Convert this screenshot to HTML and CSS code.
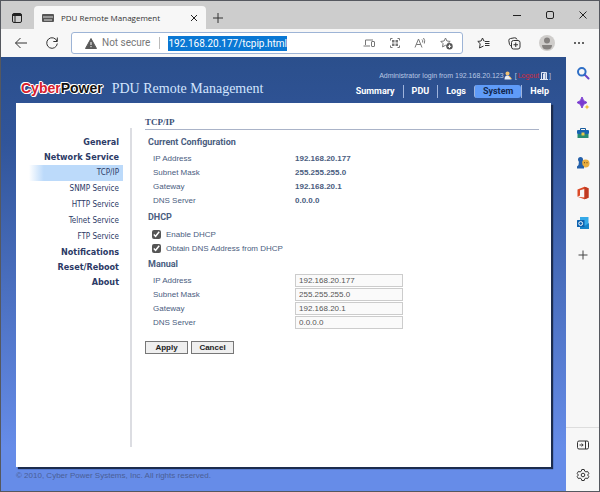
FILE: index.html
```html
<!DOCTYPE html>
<html lang="en">
<head>
  <meta charset="UTF-8" />
  <meta name="viewport" content="width=device-width, initial-scale=1.0" />
  <title>PDU Remote Management</title>
  <link rel="stylesheet" href="styles.css">
</head>
<body>
  <div class="window">
    <div class="tabstrip">
      <button class="icon-btn workspace-btn" type="button" aria-label="Tab actions">
        <svg width="12" height="12" viewBox="0 0 12 12" fill="none" stroke="#222"><rect x="1.5" y="1.5" width="9" height="9" rx="1.5"/><path d="M1.5 3h9" stroke-width="2"/><path d="M4 4v6.500"/></svg>
      </button>
      <div class="tab">
        <svg width="12" height="8" viewBox="0 0 12 8"><rect width="12" height="8" rx="1" fill="#555"/><path d="M2 2v2M4 2v2M6 2v2M8 2v2M10 2v2M2 6h8" stroke="#ddd"/></svg>
        <span class="tab-title">PDU Remote Management</span>
        <button class="icon-btn" type="button" aria-label="Close tab">
          <svg width="8" height="8" viewBox="0 0 8 8" stroke="#222"><path d="M1 1l6 6M7 1l-6 6"/></svg>
        </button>
      </div>
      <button class="icon-btn new-tab" type="button" aria-label="New tab">
        <svg width="12" height="12" viewBox="0 0 12 12" stroke="#333"><path d="M6 1v10M1 6h10"/></svg>
      </button>
      <div class="window-controls">
        <button class="icon-btn" type="button" aria-label="Minimize">
          <svg width="8" height="8" viewBox="0 0 8 8" stroke="#222"><path d="M0 4.500h8"/></svg>
        </button>
        <button class="icon-btn" type="button" aria-label="Maximize">
          <svg width="8" height="8" viewBox="0 0 8 8" fill="none" stroke="#222"><rect x=".5" y=".5" width="7" height="7" rx="1.500"/></svg>
        </button>
        <button class="icon-btn" type="button" aria-label="Close">
          <svg width="8" height="8" viewBox="0 0 8 8" stroke="#222"><path d="M.5.5l7 7M7.500.5l-7 7"/></svg>
        </button>
      </div>
    </div>

    <div class="toolbar">
      <button class="icon-btn" type="button" aria-label="Back">
        <svg width="14" height="14" viewBox="0 0 14 14" fill="none" stroke="#333"><path d="M13 7H1.500M6.500 2l-5 5 5 5"/></svg>
      </button>
      <button class="icon-btn reload" type="button" aria-label="Refresh">
        <svg width="14" height="14" viewBox="0 0 14 14" fill="none" stroke="#333"><path d="M12 5.200A5.300 5.300 0 1 0 12.300 7.500M12.300 1.500v4h-4"/></svg>
      </button>
      <div class="address">
        <svg width="12" height="11" viewBox="0 0 12 11"><path d="M6 .5L11.500 10.500H.5z" fill="#5a5a5a" stroke="#5a5a5a" stroke-linejoin="round"/><path d="M6 4v3M6 8v1.200" stroke="#fff"/></svg>
        <label class="security" for="url">Not secure</label>
        <input class="url" id="url" type="text" value="192.168.20.177/tcpip.html" />
        <div class="address-actions">
          <button class="icon-btn" type="button" aria-label="Send to devices">
            <svg width="13" height="12" viewBox="0 0 13 12" fill="none" stroke="#777"><path d="M2.500 8V3H10M.5 9H7"/><rect x="8.500" y="4.500" width="3" height="5" rx=".5"/></svg>
          </button>
          <button class="icon-btn" type="button" aria-label="QR code">
            <svg width="12" height="12" viewBox="0 0 12 12" fill="none" stroke="#777"><path d="M1.500 3.500v-2h2M8.500 1.500h2v2M10.500 8.500v2h-2M3.500 10.500h-2v-2"/><path d="M3 3h2.500v2.500H3zM6.500 3H9v2.500H6.500zM3 6.500h2.500V9H3zM6.500 6.500H9V9H6.500z" fill="#777" stroke="none"/></svg>
          </button>
          <button class="icon-btn" type="button" aria-label="Read aloud">
            <svg width="13" height="12" viewBox="0 0 13 12" fill="none" stroke="#777"><path d="M1 10.500L4.500 2 8 10.500M2.200 7.500h4.600M8 2.500q1.200 1 .6 3M9.500 1q2 2.500.8 5.500"/></svg>
          </button>
          <button class="icon-btn" type="button" aria-label="Add to favorites">
            <svg width="13" height="13" viewBox="0 0 13 13"><path d="M5.500 1l1.400 3 3.300.4-2.400 2.300.6 3.200-2.900-1.600-3 1.600.6-3.200L.8 4.400 4.100 4z" fill="none" stroke="#777"/><circle cx="9.500" cy="9.300" r="3.200" fill="#555"/><path d="M9.500 7.600V11M7.800 9.300h3.400" stroke="#fff"/></svg>
          </button>
        </div>
      </div>
      <div class="toolbar-actions">
        <button class="icon-btn" type="button" aria-label="Favorites">
          <svg width="13" height="13" viewBox="0 0 13 13" fill="none" stroke="#333"><path d="M7.500 4.200L6.900 4 5.500 1 4.100 4 .8 4.400l2.400 2.300L2.500 11l4-2M8 4.500h4.500M8 6.500h4.500M8 8.500h4.500"/></svg>
        </button>
        <button class="icon-btn" type="button" aria-label="Collections">
          <svg width="13" height="13" viewBox="0 0 13 13" fill="none" stroke="#333"><path d="M3.500 9Q2 8.800 1.500 7.500L.8 3.500Q.7 1.800 2.500 1.500L6.500.8Q8.500.6 9 2.500"/><rect x="3.500" y="3.500" width="8.500" height="8.500" rx="2"/><path d="M7.750 5.500v4.500M5.500 7.750H10"/></svg>
        </button>
        <button class="icon-btn" type="button" aria-label="Profile">
          <svg width="16" height="16" viewBox="0 0 16 16"><circle cx="8" cy="8" r="8" fill="#cfcdcb"/><circle cx="8" cy="5.500" r="3" fill="#858280"/><path d="M3 10h10q0 4.500-5 4.500T3 10z" fill="#858280"/></svg>
        </button>
        <button class="icon-btn" type="button" aria-label="More">
          <svg width="12" height="4" viewBox="0 0 12 4" fill="#333"><circle cx="2" cy="2" r="1"/><circle cx="6" cy="2" r="1"/><circle cx="10" cy="2" r="1"/></svg>
        </button>
      </div>
    </div>

    <div class="content">
      <div class="page">
        <header class="header">
          <div class="brand">
            <span class="logo"><span class="logo-red">Cyber</span>Power</span>
            <h1>PDU Remote Management</h1>
          </div>
          <div class="header-right">
            <div class="login">
              <span>Administrator login from 192.168.20.123</span>
              <svg width="8" height="9" viewBox="0 0 8 9"><circle cx="3.500" cy="2.500" r="2" fill="#f0c070"/><path d="M.5 8.500q0-4 3-4t4 4z" fill="#e8edf5"/><path d="M5 5l2.500 3" stroke="#e8a840"/></svg>
              <span class="logout">[<a href="#logout">Logout</a><svg width="8" height="9" viewBox="0 0 8 9" fill="none" stroke="#dfe6f5"><path d="M1.500 8V1.500h5V8M0 8.500h8"/><path d="M3 3l2.500-1.500v6.500L3 8.500z" fill="#dfe6f5" stroke="none"/></svg>]</span>
            </div>
            <nav class="topnav">
              <a href="#summary">Summary</a>
              <a href="#pdu">PDU</a>
              <a href="#logs">Logs</a>
              <a class="active" href="#system">System</a>
              <a href="#help">Help</a>
            </nav>
          </div>
        </header>

        <main class="panel">
          <nav class="sidenav">
            <a href="#general">General</a>
            <a href="#network">Network Service</a>
            <a class="sub active" href="#tcpip">TCP/IP</a>
            <a class="sub" href="#snmp">SNMP Service</a>
            <a class="sub" href="#http">HTTP Service</a>
            <a class="sub" href="#telnet">Telnet Service</a>
            <a class="sub" href="#ftp">FTP Service</a>
            <a href="#notifications">Notifications</a>
            <a href="#reset">Reset/Reboot</a>
            <a href="#about">About</a>
          </nav>

          <form class="settings">
            <h2>TCP/IP</h2>

            <h3>Current Configuration</h3>
            <dl class="rows">
              <dt>IP Address</dt><dd>192.168.20.177</dd>
              <dt>Subnet Mask</dt><dd>255.255.255.0</dd>
              <dt>Gateway</dt><dd>192.168.20.1</dd>
              <dt>DNS Server</dt><dd>0.0.0.0</dd>
            </dl>

            <h3>DHCP</h3>
            <div class="checks">
              <label><input type="checkbox" name="dhcp" checked /> Enable DHCP</label>
              <label><input type="checkbox" name="dns-dhcp" checked /> Obtain DNS Address from DHCP</label>
            </div>

            <h3>Manual</h3>
            <div class="rows">
              <label for="ip">IP Address</label>
              <input type="text" id="ip" value="192.168.20.177" disabled />
              <label for="mask">Subnet Mask</label>
              <input type="text" id="mask" value="255.255.255.0" disabled />
              <label for="gateway">Gateway</label>
              <input type="text" id="gateway" value="192.168.20.1" disabled />
              <label for="dns">DNS Server</label>
              <input type="text" id="dns" value="0.0.0.0" disabled />
            </div>

            <div class="buttons">
              <button type="submit">Apply</button>
              <button type="reset">Cancel</button>
            </div>
          </form>
        </main>

        <footer class="footer">© 2010, Cyber Power Systems, Inc. All rights reserved.</footer>
      </div>

      <aside class="edgebar">
        <button class="icon-btn" type="button" aria-label="Search">
          <svg width="14" height="14" viewBox="0 0 14 14" fill="none"><path d="M8.500 8.500l4 4" stroke="#6a45c8" stroke-width="2" stroke-linecap="round"/><circle cx="5.800" cy="5.800" r="3.800" stroke="#2f6fc6" stroke-width="2"/></svg>
        </button>
        <button class="icon-btn" type="button" aria-label="Discover">
          <svg width="14" height="14" viewBox="0 0 14 14"><path d="M6 1q.8 4.500 5 5.500-4.200 1-5 5.500Q5.200 7.500 1 6.500 5.200 5.500 6 1z" fill="#7a3bd0" stroke="#7a3bd0"/><path d="M11 8.500l.8 1.700 1.700.8-1.700.8L11 13.500l-.8-1.700-1.700-.8 1.700-.8z" fill="#f2bd35"/></svg>
        </button>
        <button class="icon-btn" type="button" aria-label="Tools">
          <svg width="14" height="14" viewBox="0 0 14 14"><path d="M4.500 4V2.500h5V4" fill="none" stroke="#175a9c"/><rect x="1" y="4" width="12" height="4" rx="1" fill="#1764b0"/><path d="M1.500 8h11v4h-11z" fill="#278b72"/><rect x="5.500" y="6.500" width="3" height="3" fill="#e7c84d"/></svg>
        </button>
        <button class="icon-btn" type="button" aria-label="Games">
          <svg width="14" height="14" viewBox="0 0 14 14"><circle cx="9.500" cy="7.500" r="4" fill="#e9ad3e"/><circle cx="8.500" cy="6.700" r=".6" fill="#704b18"/><circle cx="11" cy="6.700" r=".6" fill="#704b18"/><circle cx="4.500" cy="3.500" r="2.500" fill="#245fa9"/><path d="M3 5h3l.5 4L8 10.500v2H1v-2L2.500 9z" fill="#245fa9"/></svg>
        </button>
        <button class="icon-btn" type="button" aria-label="Office">
          <svg width="14" height="14" viewBox="0 0 14 14"><path d="M8.500.8l4 1.500v9.400l-4 1.500-7-2.500 7 .8V3L4 4.200v5.300l-2.500 1.200V3.500z" fill="#dc4a27"/><path d="M8.500.8l4 1.500v9.400l-4 1.500z" fill="#c03a22"/></svg>
        </button>
        <button class="icon-btn" type="button" aria-label="Outlook">
          <svg width="14" height="14" viewBox="0 0 14 14"><rect x="4" y="1" width="8.500" height="10" fill="#35a9e8"/><path d="M4 7l4.500 3L13 7v6H4z" fill="#1684c9"/><rect x="1" y="4" width="7.500" height="7" rx=".5" fill="#0c62b0"/><circle cx="4.700" cy="7.500" r="1.900" fill="none" stroke="#fff"/></svg>
        </button>
        <button class="icon-btn customize" type="button" aria-label="Customize">
          <svg width="10" height="10" viewBox="0 0 10 10" stroke="#444"><path d="M5 .5v9M.5 5h9"/></svg>
        </button>
        <div class="edgebar-bottom">
          <button class="icon-btn" type="button" aria-label="Hide sidebar">
            <svg width="12" height="10" viewBox="0 0 12 10" fill="none" stroke="#333"><rect x=".5" y="1" width="11" height="8" rx="1.500"/><path d="M8.500 1v8M2.500 5H6M4.700 3.500L6.200 5 4.700 6.500"/></svg>
          </button>
          <button class="icon-btn" type="button" aria-label="Settings">
            <svg width="14" height="14" viewBox="0 0 14 14" fill="none" stroke="#333" stroke-linejoin="round"><path d="M5.800 1.500h2.400l.5 1.700 1.200.7 1.700-.5 1.200 2.100L11.600 7l1.200 1.500-1.200 2.100-1.700-.5-1.200.7-.5 1.700H5.800l-.5-1.700-1.200-.7-1.700.5-1.200-2.100L2.400 7 1.200 5.500l1.200-2.100 1.700.5 1.200-.7z"/><circle cx="7" cy="7" r="1.800"/></svg>
          </button>
        </div>
      </aside>
    </div>
  </div>
</body>
</html>
```
FILE: styles.css
```css
* {
  margin: 0;
  padding: 0;
  box-sizing: border-box;
}

body {
  font-family: 'Liberation Sans', Arial, sans-serif;
  font-size: 8px;
  color: #4a5d80;
}

a {
  color: inherit;
  text-decoration: none;
}

.window {
  display: flex;
  flex-direction: column;
  min-height: 100vh;
  border: 1px solid #55585f;
  background: #f7f7f7;
}

.icon-btn {
  display: flex;
  align-items: center;
  justify-content: center;
  border: none;
  background: none;
}

/* browser chrome */
.tabstrip {
  display: flex;
  height: 28px;
  padding-left: 10px;
  background: #cdcdcd;
}

.tab {
  display: flex;
  align-items: center;
  gap: 7px;
  width: 172px;
  margin: 5px 0 0 11px;
  padding: 0 8px;
  border-radius: 4px 4px 0 0;
  background: #f7f7f7;
}

.tab-title {
  flex: 1;
  font-family: 'Open Sans', sans-serif;
  font-size: 8px;
  color: #333;
}

.workspace-btn,
.new-tab {
  padding-top: 5px;
}

.new-tab {
  margin-left: 6px;
}

.window-controls {
  display: flex;
  gap: 25px;
  margin-left: auto;
  padding-right: 12px;
}

.toolbar {
  display: flex;
  align-items: center;
  height: 28px;
  padding: 0 14px 0 13px;
}

.reload {
  margin: 0 12px 0 17px;
}

.address {
  display: flex;
  flex: 1;
  align-items: center;
  height: 22px;
  padding: 0 9px 0 13px;
  border: 1px solid #9db4d6;
  border-radius: 3px;
  background: #fff;
}

.security {
  margin: 0 8px 0 5px;
  padding-right: 9px;
  border-right: 1px solid #bbb;
  font: 10px/12px Roboto, sans-serif;
  color: #777;
}

.url {
  field-sizing: content;
  height: 15px;
  border: none;
  background: #0a78d4;
  font: 10px Roboto, sans-serif;
  color: #fff;
}

.address-actions {
  display: flex;
  gap: 13px;
  margin-left: auto;
}

.toolbar-actions {
  display: flex;
  align-items: center;
  gap: 18px;
  margin-left: 14px;
}

.content {
  display: flex;
  flex: 1;
}

.edgebar {
  display: flex;
  flex-direction: column;
  align-items: center;
  gap: 16px;
  width: 33px;
  padding-top: 9px;
}

.customize {
  margin-top: 4px;
}

.edgebar-bottom {
  display: flex;
  flex-direction: column;
  align-items: center;
  gap: 18px;
  width: 100%;
  margin-top: auto;
  padding: 12px 0 9px;
  border-top: 1px solid #ddd;
}

/* PDU page */
.page {
  display: flex;
  flex: 1;
  flex-direction: column;
  padding: 0 15px;
  background: linear-gradient(#2b4f8c, #31559a 20%, #668ce8 90%);
}

.header {
  display: flex;
  justify-content: space-between;
  height: 46px;
}

.brand {
  display: flex;
  align-items: center;
  gap: 9px;
  padding: 16px 0 0 5px;
}

.logo {
  font-size: 14px;
  font-weight: bold;
  color: #111;
  text-shadow: 1px 0 #fff, -1px 0 #fff, 0 1px #fff, 0 -1px #fff, 1px 1px #fff, -1px -1px #fff;
}

.logo-red {
  color: #d8202c;
}

.brand h1 {
  padding-top: 2px;
  font: 14px 'Liberation Serif', serif;
  color: #d3e5ff;
}

.header-right {
  display: flex;
  flex-direction: column;
  align-items: flex-end;
  gap: 4px;
  padding-top: 13px;
}

.login {
  display: flex;
  align-items: center;
  height: 11px;
  font-size: 7px;
  color: #b9c8e4;
}

.login svg {
  flex: none;
}

.logout {
  display: flex;
  align-items: center;
  gap: 1px;
  margin-left: 3px;
}

.logout a {
  color: #d32a3c;
}

.topnav {
  display: flex;
  align-items: center;
  font: bold 9px/13px Roboto, sans-serif;
  color: #fff;
}

.topnav a {
  padding: 0 8px;
}

.topnav a + a {
  border-left: 1px solid #9fb4dc;
}

.topnav a:last-child {
  padding-right: 2px;
}

.topnav .active {
  border-radius: 3px;
  background: #5f9bf8;
  color: #13284f;
}

.panel {
  display: flex;
  flex: 1;
  padding: 12px 12px 20px 8px;
  background: #fff;
  box-shadow: 2px 2px 1px #1c2c4e;
}

.sidenav {
  width: 108px;
  margin-top: 13px;
  padding-top: 7px;
  border-right: 2px solid #dcdde2;
  font: bold 9px/15px 'DejaVu Sans Condensed', Tahoma, sans-serif;
  text-align: right;
  color: #2c3a66;
}

.sidenav a {
  display: block;
  margin-right: 7px;
  padding-right: 4px;
}

.sidenav .sub {
  font-size: 8px;
  font-weight: normal;
  line-height: 16px;
}

.sidenav .active {
  background: linear-gradient(90deg, #fff 5%, #bcdafa 20%);
}

.settings {
  flex: 1;
  padding-left: 13px;
}

.settings h2 {
  border-bottom: 1px solid #aab3c8;
  font: bold 9px/14px 'Liberation Serif', serif;
  color: #3d5178;
}

.settings h3 {
  padding: 3px 0 4px 3px;
  font: bold 9px/12px Roboto, sans-serif;
  color: #4a5d80;
}

.rows {
  display: grid;
  grid-template-columns: 142px 108px;
  padding-left: 8px;
  line-height: 14px;
}

.settings h2 + h3 {
  padding-top: 6px;
}

.rows dd {
  font-weight: bold;
}

.rows input {
  height: 13px;
  padding: 0 3px;
  border: 1px solid #ccc;
  background: #fafafa;
  font: 8px 'Liberation Sans', Arial, sans-serif;
  color: #555;
}

.checks {
  padding-left: 7px;
}

.checks label {
  display: flex;
  align-items: center;
  gap: 5px;
  height: 14px;
}

.checks input {
  width: 9px;
  height: 9px;
  accent-color: #555;
}

.buttons {
  display: flex;
  gap: 3px;
  margin-top: 11px;
}

.buttons button {
  width: 43px;
  height: 13px;
  border: 1px solid #777;
  background: #efefef;
  font: bold 8px 'Liberation Sans', Arial, sans-serif;
  color: #222;
}

.footer {
  padding-bottom: 6px;
  line-height: 18px;
  color: #4b5f96;
}
```
